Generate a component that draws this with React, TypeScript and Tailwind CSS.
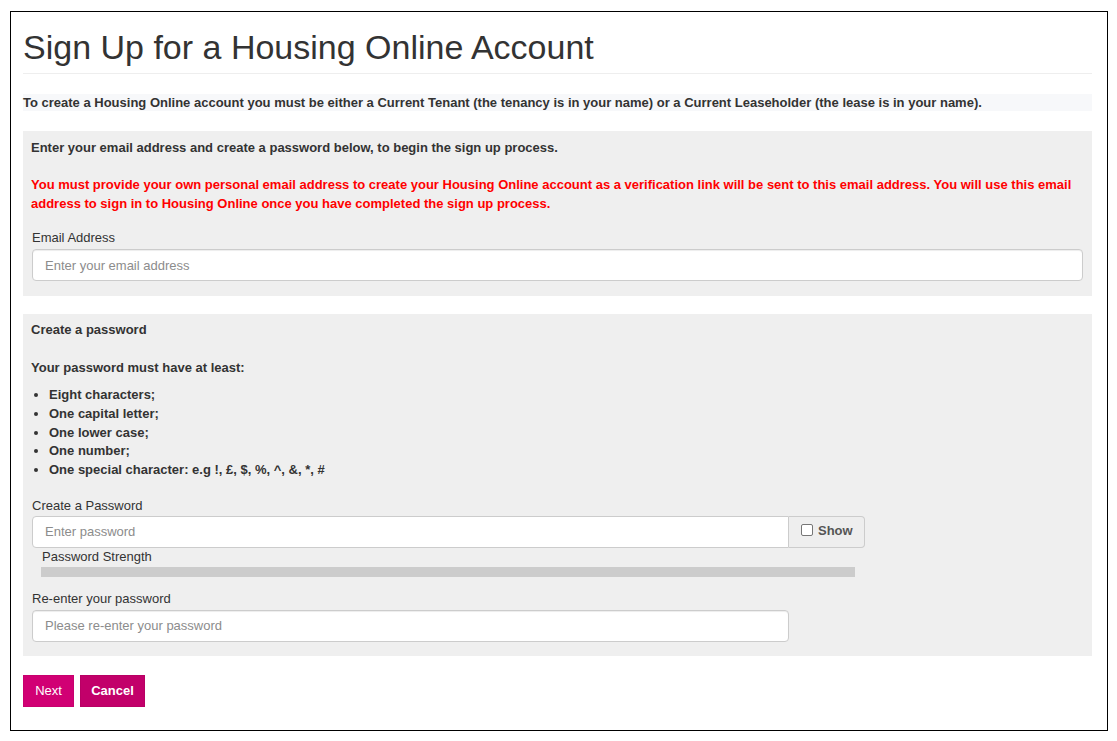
import React from "react";

const rules = [
  "Eight characters;",
  "One capital letter;",
  "One lower case;",
  "One number;",
  "One special character: e.g !, £, $, %, ^, &, *, #",
];

const inputClass =
  "block h-[32px] w-full rounded-[4px] border border-[#cccccc] bg-white px-3 text-[13px] text-[#555] placeholder:text-[#8c8c8c] outline-none shadow-[inset_0_1px_1px_rgba(0,0,0,0.075)]";

export default function App() {
  return (
    <div className="bg-white min-h-[741px] pt-[11px] pl-[10px] font-['Liberation_Sans',Arial,sans-serif] text-[#333333]">
      <div className="w-[1098px] h-[720px] border border-black pl-[12px] pr-[15px] pt-[15px]">
        {/* Heading */}
        <h1 className="text-[34px] leading-[40px] font-normal text-[#333]">
          Sign Up for a Housing Online Account
        </h1>
        <div className="mt-[6px] border-t border-[#eeeeee]" />

        <p className="mt-[20px] bg-[#f7f8fa] text-[13px] leading-[17px] font-bold">
          To create a Housing Online account you must be either a Current Tenant (the tenancy is in your name) or a
          Current Leaseholder (the lease is in your name).
        </p>

        {/* Email panel */}
        <section className="mt-[20px] bg-[#efefef] px-[8px] pt-[7px] pb-[15px]">
          <p className="text-[13px] leading-[19px] font-bold">
            Enter your email address and create a password below, to begin the sign up process.
          </p>
          <p className="mt-[18px] text-[13px] leading-[19px] font-bold text-[#ff0000]">
            You must provide your own personal email address to create your Housing Online account as a verification
            link will be sent to this email address. You will use this email address to sign in to Housing Online once
            you have completed the sign up process.
          </p>
          <div className="mt-[16px] px-[1px]">
            <label className="block text-[13px] leading-[18px] mb-[2px]">Email Address</label>
            <input className={inputClass} placeholder="Enter your email address" />
          </div>
        </section>

        {/* Password panel */}
        <section className="mt-[18px] bg-[#efefef] px-[8px] pt-[6px] pb-[14px]">
          <p className="text-[13px] leading-[19px] font-bold">Create a password</p>
          <p className="mt-[19px] text-[13px] leading-[19px] font-bold">Your password must have at least:</p>
          <ul className="mt-[9px] list-disc pl-[18px] text-[13px] leading-[18.75px] font-bold">
            {rules.map((r) => (
              <li key={r}>{r}</li>
            ))}
          </ul>

          <div className="mt-[17px] px-[1px]">
            <label className="block text-[13px] leading-[18px] mb-[1px]">Create a Password</label>
            <div className="flex w-[833px]">
              <input
                type="password"
                className="block h-[32px] flex-1 rounded-l-[4px] border border-[#cccccc] bg-white px-3 text-[13px] text-[#555] placeholder:text-[#8c8c8c] outline-none"
                placeholder="Enter password"
              />
              <label className="flex h-[32px] w-[76px] items-start gap-[5px] rounded-r-[4px] border border-l-0 border-[#cccccc] bg-[#eeeeee] pl-[12px] pt-[4px] text-[13px] font-bold text-[#555]">
                <span className="mt-[3px] block h-[12px] w-[12px] rounded-[2px] border border-[#767676] bg-white" />
                Show
              </label>
            </div>
            <div className="pl-[9px] w-[823px]">
              <p className="pl-[1px] text-[13px] leading-[18px]">Password Strength</p>
              <div className="mt-[1px] h-[10px] w-full bg-[#cccccc]" />
            </div>
          </div>

          <div className="mt-[13px] px-[1px]">
            <label className="block text-[13px] leading-[18px] mb-[2px]">Re-enter your password</label>
            <div className="w-[757px]">
              <input type="password" className={inputClass} placeholder="Please re-enter your password" />
            </div>
          </div>
        </section>

        {/* Actions */}
        <div className="mt-[19px] flex gap-[6px]">
          <button className="h-[32px] w-[51px] bg-[#d10074] text-[13px] text-white border border-[#c8006e]">
            Next
          </button>
          <button className="h-[32px] w-[65px] bg-[#c2006a] text-[13px] font-bold text-white border border-[#b80064]">
            Cancel
          </button>
        </div>
      </div>
    </div>
  );
}
